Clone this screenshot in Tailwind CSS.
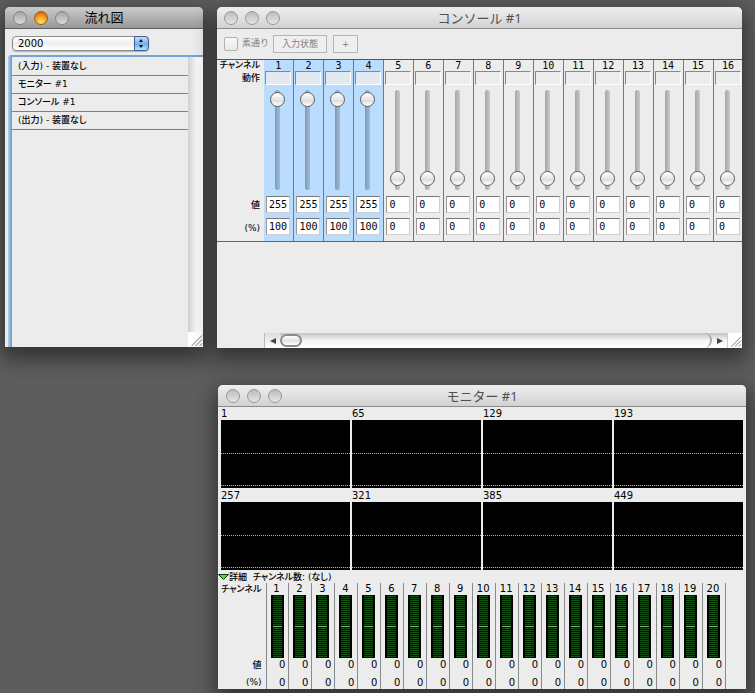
<!DOCTYPE html>
<html lang="ja">
<head>
    <meta charset="UTF-8">
    <meta name="viewport" content="width=device-width, initial-scale=1.0">
    <title>流れ図</title>
    <script src="https://cdn.jsdelivr.net/npm/@tailwindcss/browser@4"></script>
</head>
<body class="relative min-h-screen overflow-hidden bg-[#5d5d5d] font-['DejaVu_Sans','Noto_Sans_CJK_JP',sans-serif] text-[10px] text-black">

    <!-- Flow window -->
    <section class="absolute left-[5px] top-[7px] flex h-[340px] w-[198px] flex-col overflow-hidden rounded-t-[5px] bg-[#ececec] shadow-[0_8px_20px_4px_rgba(0,0,0,0.45)]">
        <header class="grid h-[22px] shrink-0 grid-cols-[1fr_auto_1fr] items-center border-b border-[#606060] bg-linear-to-b from-[#cbcbcb] to-[#999999] px-2">
            <div class="flex gap-[7px]">
                <button aria-label="閉じる" class="size-[14px] rounded-full border border-[#858585] bg-linear-to-b from-[#a5a5a5] to-[#dadada]"></button>
                <button aria-label="しまう" class="size-[14px] rounded-full border border-[#a05a20] bg-[radial-gradient(circle_at_50%_85%,#ffe66a_0%,#f9a32b_45%,#d96a12_80%)]"></button>
                <button aria-label="拡大" class="size-[14px] rounded-full border border-[#858585] bg-linear-to-b from-[#a5a5a5] to-[#dadada]"></button>
            </div>
            <h1 class="text-[13px] leading-5">流れ図</h1>
        </header>
        <div class="flex h-[26px] shrink-0 items-center px-[7px] pt-[2px]">
            <div class="relative h-[15px] w-[137px]">
                <select aria-label="番号" class="h-full w-full appearance-none rounded-[4px] border border-[#8c8c8c] bg-linear-to-b from-white via-[#ededed] to-white pl-[5px] text-[10px] leading-3 shadow-[0_1px_1px_rgba(0,0,0,0.25)]">
                    <option>2000</option>
                </select>
                <svg class="pointer-events-none absolute right-0 top-0" width="15" height="15" viewBox="0 0 15 15">
                    <defs>
                        <linearGradient id="aqua" x1="0" y1="0" x2="0" y2="1">
                            <stop offset="0" stop-color="#c6dff6"/>
                            <stop offset=".48" stop-color="#85b8ec"/>
                            <stop offset=".52" stop-color="#68a8e8"/>
                            <stop offset="1" stop-color="#b8ecff"/>
                        </linearGradient>
                    </defs>
                    <path d="M.5 .5H11a3.5 3.5 0 0 1 3.500 3.500V11a3.500 3.500 0 0 1-3.500 3.500H.5z" fill="url(#aqua)" stroke="#3f5d94"/>
                    <path d="M5 6 7 3l2 3zM5 9l2 3 2-3z" fill="#111"/>
                </svg>
            </div>
        </div>
        <div class="ml-[3px] flex grow rounded-tl-[3px] bg-linear-to-r from-[#b4d0ea] to-[#5f9ad3] to-[4px] pl-1">
            <div class="flex grow border-t-2 border-[#6fa5d8]">
                <ul class="grow bg-[#ececec] pt-px text-[9px] leading-[17px] font-medium [font-feature-settings:'palt']">
                    <li class="border-b border-[#808080] pl-[6px]">(入力) - 装置なし</li>
                    <li class="border-b border-[#808080] pl-[6px]">モニター #1</li>
                    <li class="border-b border-[#808080] pl-[6px]">コンソール #1</li>
                    <li class="border-b border-[#808080] pl-[6px]">(出力) - 装置なし</li>
                </ul>
                <div class="flex w-[15px] flex-col">
                    <div class="grow bg-linear-to-r from-[#cfcfcf] via-[#f4f4f4] to-white"></div>
                    <svg class="bg-white" width="15" height="15" viewBox="0 0 15 15" fill="none" stroke="#777">
                        <path d="M3.500 14 14 3.500M7.500 14 14 7.500M11.500 14l2.500-2.500"/>
                    </svg>
                </div>
            </div>
        </div>
    </section>

    <!-- Console window -->
    <section class="absolute left-[217px] right-[13px] top-[7px] flex h-[341px] flex-col overflow-hidden rounded-t-[5px] bg-[#ececec] shadow-[0_8px_20px_4px_rgba(0,0,0,0.45)]">
        <header class="grid h-[22px] shrink-0 grid-cols-[1fr_auto_1fr] items-center border-b border-[#8b8b8b] bg-linear-to-b from-[#efefef] to-[#d2d2d2] px-[7px]">
            <div class="flex gap-[7px]">
                <button aria-label="閉じる" class="size-[14px] rounded-full border border-[#989898] bg-linear-to-b from-[#bcbcbc] to-[#e6e6e6]"></button>
                <button aria-label="しまう" class="size-[14px] rounded-full border border-[#989898] bg-linear-to-b from-[#bcbcbc] to-[#e6e6e6]"></button>
                <button aria-label="拡大" class="size-[14px] rounded-full border border-[#989898] bg-linear-to-b from-[#bcbcbc] to-[#e6e6e6]"></button>
            </div>
            <h2 class="font-['Noto_Sans','Noto_Sans_CJK_JP',sans-serif] text-[13px] leading-5 text-[#505050]">コンソール #1</h2>
        </header>
        <div class="flex h-[31px] shrink-0 items-center border-b border-[#555] pl-[7px] text-[9px] text-[#808080]">
            <input id="through" type="checkbox" class="size-[14px] appearance-none rounded-[2px] border border-[#b0b0b0] bg-linear-to-b from-[#f8f8f8] to-[#e9e9e9]">
            <label for="through" class="ml-1">素通り</label>
            <button class="ml-1 h-[18px] w-[54px] border border-[#b5b5b5] bg-[#efefef] leading-4">入力状態</button>
            <button class="ml-[6px] h-[18px] w-[25px] border border-[#b5b5b5] bg-[#efefef] leading-4">+</button>
        </div>
        <div class="overflow-hidden border-b border-[#666]">
            <table class="w-[527px] table-fixed border-collapse">
                <tbody id="console"></tbody>
            </table>
        </div>
        <div class="mt-auto flex h-[15px] pl-[47px]">
            <div class="flex grow items-center border-l border-[#bbb] bg-linear-to-b from-[#c4c4c4] via-[#f5f5f5] to-white">
                <button aria-label="左へ" class="flex h-full w-[15px] items-center justify-center bg-linear-to-b from-[#dedede] to-white">
                    <svg width="6" height="6" viewBox="0 0 6 6" fill="#444"><path d="M6 0v6L0 3z"/></svg>
                </button>
                <div class="h-[13px] w-[22px] rounded-full border-2 border-[#8b8b8b] bg-linear-to-b from-white via-[#e2e2e2] to-white"></div>
                <div class="h-full grow rounded-r-full border-r-2 border-[#a9a9a9]"></div>
                <button aria-label="右へ" class="flex h-full w-[15px] items-center justify-center">
                    <svg width="6" height="6" viewBox="0 0 6 6" fill="#444"><path d="M0 0v6l6-3z"/></svg>
                </button>
            </div>
            <svg class="border-l border-[#ccc] bg-white" width="15" height="15" viewBox="0 0 15 15" fill="none" stroke="#777">
                <path d="M3.500 14 14 3.500M7.500 14 14 7.500M11.500 14l2.500-2.500"/>
            </svg>
        </div>
    </section>

    <!-- Monitor window -->
    <section class="absolute left-[218px] right-[9px] top-[385px] flex h-[304px] flex-col overflow-hidden rounded-t-[5px] bg-[#ececec] shadow-[0_8px_20px_4px_rgba(0,0,0,0.45)]">
        <header class="grid h-[22px] shrink-0 grid-cols-[1fr_auto_1fr] items-center border-b border-[#8b8b8b] bg-linear-to-b from-[#efefef] to-[#d2d2d2] px-2">
            <div class="flex gap-[7px]">
                <button aria-label="閉じる" class="size-[14px] rounded-full border border-[#989898] bg-linear-to-b from-[#bcbcbc] to-[#e6e6e6]"></button>
                <button aria-label="しまう" class="size-[14px] rounded-full border border-[#989898] bg-linear-to-b from-[#bcbcbc] to-[#e6e6e6]"></button>
                <button aria-label="拡大" class="size-[14px] rounded-full border border-[#989898] bg-linear-to-b from-[#bcbcbc] to-[#e6e6e6]"></button>
            </div>
            <h2 class="font-['Noto_Sans','Noto_Sans_CJK_JP',sans-serif] text-[13px] leading-5 text-[#505050]">モニター #1</h2>
        </header>
        <div id="graphs" class="grid grid-cols-4 gap-x-[2px] gap-y-px px-[3px]"></div>
        <button class="flex h-[13px] items-center text-left text-[9px] leading-3 font-medium [font-feature-settings:'palt']">
            <svg width="11" height="6" viewBox="0 0 11 6"><path d="M.5 .5h10l-5 5z" fill="#3fe03f" stroke="#0b3d0b"/></svg>
            <span class="whitespace-pre">詳細  チャンネル数: (なし)</span>
        </button>
        <table class="w-[508px] grow table-fixed border-collapse">
            <tbody id="monitor"></tbody>
        </table>
    </section>

    <script>
    const LABEL = "p-0 pr-1 text-right align-middle text-[9px] leading-[11px] font-medium [font-feature-settings:'palt']";

    // 1..n
    function range(n) {
        return Array.from({ length: n }, (_, i) => i + 1);
    }

    // Console: the first four channels are selected and at full
    function renderConsole() {
        const channels = range(16);
        const cell = n => 'border-r border-[#777] p-0 ' + (n <= 4 ? 'bg-[#b9dcff]' : '');
        const field = (n, name, value) => `
            <td class="${cell(n)} pl-[2px] pt-[2px] align-top">
                <input aria-label="${name} ${n}" value="${value}" class="block h-[17px] w-[24px] border border-[#cfcfcf] border-t-[#777] border-l-[#999] bg-white pl-[2px] font-['DejaVu_Sans_Mono',monospace] text-[10px] leading-[15px]">
            </td>`;

        document.getElementById('console').innerHTML = `
            <tr class="h-[11px]">
                <th class="w-[47px] ${LABEL}">チャンネル</th>
                ${channels.map(n => `<th class="${cell(n)} pr-px font-['DejaVu_Sans_Mono',monospace] text-[10px] leading-[11px] font-normal">${n}</th>`).join('')}
            </tr>
            <tr class="h-[15px]">
                <th class="${LABEL}">動作</th>
                ${channels.map(n => `<td class="${cell(n)} pl-px align-top"><div class="h-[14px] w-[26px] border border-white border-t-[#888] border-l-[#888] ${n <= 4 ? 'bg-[#e2e9f0]' : ''}"></div></td>`).join('')}
            </tr>
            <tr class="h-[108px]">
                <th></th>
                ${channels.map(n => `
                <td class="${cell(n)} pl-[6px] pt-[4px] align-top">
                    <div class="relative h-[100px] w-[15px] before:absolute before:inset-y-0 before:left-[5px] before:w-[5px] before:rounded-full before:bg-linear-to-r before:from-black/30 before:to-black/15">
                        <input type="range" min="0" max="255" value="${n <= 4 ? 255 : 0}" aria-label="フェーダー ${n}"
                            class="relative block h-full w-full appearance-none bg-transparent pt-[2px] pb-[4px] [writing-mode:vertical-lr] [direction:rtl] [&::-webkit-slider-thumb]:size-[15px] [&::-webkit-slider-thumb]:appearance-none [&::-webkit-slider-thumb]:rounded-full [&::-webkit-slider-thumb]:border [&::-webkit-slider-thumb]:border-[#5c5c5c] [&::-webkit-slider-thumb]:bg-[linear-gradient(#ffffff,#e6e6e6_50%,#dcdcdc_55%,#ffffff)]">
                    </div>
                </td>`).join('')}
            </tr>
            <tr class="h-[22px]">
                <th class="${LABEL}">値</th>
                ${channels.map(n => field(n, '値', n <= 4 ? 255 : 0)).join('')}
            </tr>
            <tr class="h-[25px]">
                <th class="${LABEL}">(%)</th>
                ${channels.map(n => field(n, '%', n <= 4 ? 100 : 0)).join('')}
            </tr>`;
    }

    // Monitor: eight graphs of 64 channels
    function renderGraphs() {
        document.getElementById('graphs').innerHTML = range(8).map(n => `
            <figure>
                <figcaption class="h-[13px] leading-[14px]">${(n - 1) * 64 + 1}</figcaption>
                <div class="h-[68px] bg-black pt-[33px]">
                    <div class="h-px bg-[repeating-linear-gradient(90deg,#b5b5b5_0_1px,#000_1px_2px)]"></div>
                    <div class="mt-[31px] h-px bg-[repeating-linear-gradient(90deg,#6fd36f_0_1px,#0a2a0a_1px_2px)]"></div>
                </div>
            </figure>`).join('');
    }

    // Monitor: level meters of the first twenty channels
    function renderMonitor() {
        const channels = range(20);
        const line = 'border-x border-[#8a8a8a] p-0';
        const value = `<td class="${line} pr-[3px] text-right leading-3">0</td>`;
        document.getElementById('monitor').innerHTML = `
            <tr class="h-[12px]">
                <th class="w-[48px] ${LABEL}">チャンネル</th>
                ${channels.map(n => `<th class="${line} pr-[2px] leading-3 font-normal">${n}</th>`).join('')}
            </tr>
            <tr class="h-[63px]">
                <th></th>
                ${channels.map(() => `
                <td class="${line} pl-[4px] align-top">
                    <div class="h-[63px] w-[13px] bg-black px-[2px]">
                        <div class="h-[31px] bg-[repeating-linear-gradient(#041004_0_1px,#155015_1px_2px)]"></div>
                        <div class="h-px bg-[#8aa88a]"></div>
                        <div class="h-[31px] bg-[repeating-linear-gradient(#041004_0_1px,#155015_1px_2px)]"></div>
                    </div>
                </td>`).join('')}
            </tr>
            <tr class="h-[14px]">
                <th class="${LABEL}">値</th>
                ${channels.map(() => value).join('')}
            </tr>
            <tr>
                <th class="${LABEL} pt-[4px]">(%)</th>
                ${channels.map(() => value.replace('p-0', 'p-0 pt-[4px]')).join('')}
            </tr>`;
    }

    renderConsole();
    renderGraphs();
    renderMonitor();
    </script>
</body>
</html>
